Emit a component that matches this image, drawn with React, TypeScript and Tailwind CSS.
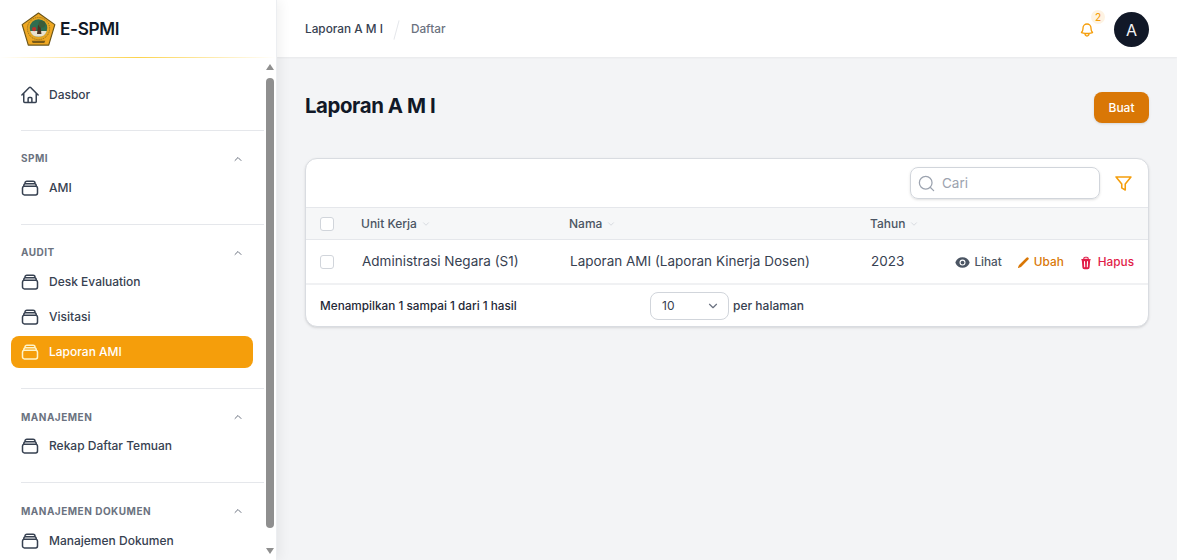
import React from "react";
import { ChevronDown, ChevronUp, Search } from "lucide-react";

function StackIcon({ className }: { className?: string }) {
  return (
    <svg viewBox="0 0 24 24" fill="none" stroke="currentColor" strokeWidth={1.8} className={className}>
      <path
        strokeLinecap="round"
        strokeLinejoin="round"
        d="M6 6.878V6a2.25 2.25 0 012.25-2.25h7.5A2.25 2.25 0 0118 6v.878m-12 0c.235-.083.487-.128.75-.128h10.5c.263 0 .515.045.75.128m-12 0A2.25 2.25 0 004.5 9v.878m13.5-3A2.25 2.25 0 0119.5 9v.878m0 0a2.246 2.246 0 00-.75-.128H5.25c-.263 0-.515.045-.75.128m15 0A2.25 2.25 0 0121 12v6a2.25 2.25 0 01-2.25 2.25H5.25A2.25 2.25 0 013 18v-6c0-.98.626-1.813 1.5-2.122"
      />
    </svg>
  );
}

function HomeIcon({ className }: { className?: string }) {
  return (
    <svg viewBox="0 0 24 24" fill="none" stroke="currentColor" strokeWidth={1.8} className={className}>
      <path
        strokeLinecap="round"
        strokeLinejoin="round"
        d="M2.25 12l8.954-8.955c.44-.439 1.152-.439 1.591 0L21.75 12M4.5 9.75v10.125c0 .621.504 1.125 1.125 1.125H9.75v-4.875c0-.621.504-1.125 1.125-1.125h2.25c.621 0 1.125.504 1.125 1.125V21h4.125c.621 0 1.125-.504 1.125-1.125V9.75M8.25 21h8.25"
      />
    </svg>
  );
}

function Logo() {
  return (
    <svg viewBox="0 0 36 36" className="w-[35px] h-[35px] shrink-0">
      <path d="M18 1 34.8 13 28.500 34H7.500L1.200 13Z" fill="#efa823" stroke="#6b5518" strokeWidth="1.200" strokeLinejoin="round" />
      <circle cx="18" cy="17" r="11.500" fill="#e3a524" stroke="#8a6a18" strokeWidth="1" strokeDasharray="1 1" />
      <circle cx="18" cy="16.500" r="9" fill="#2f6d4f" />
      <path d="M9.500 19.500h17a9 9 0 0 1-17 0Z" fill="#e8e2cf" />
      <path d="M17.500 13h2.500l1 9.500h-4.500Z" fill="#4a3423" />
      <circle cx="21.500" cy="12.500" r="3.500" fill="#3b5d3a" />
      <circle cx="13.500" cy="17.500" r="2.200" fill="#b8322a" />
      <path d="M11 29.500h14l-1 2.500H12Z" fill="#7a5a16" />
    </svg>
  );
}

function NavItem({ label, active }: { label: string; active?: boolean }) {
  return (
    <a
      className={
        active
          ? "flex items-center h-[31.5px] rounded-lg bg-[#f59e0b] text-white px-[9px] gap-[9px] text-[12px] font-medium"
          : "flex items-center h-[31.5px] rounded-lg text-[#374151] px-[9px] gap-[9px] text-[12px] font-medium"
      }
    >
      <StackIcon className={active ? "w-5 h-5 text-[#fef3c7]" : "w-5 h-5 text-[#374151]"} />
      <span>{label}</span>
    </a>
  );
}

function NavGroup({ title, items, activeItem }: { title: string; items: string[]; activeItem?: string }) {
  return (
    <div className="border-b border-[#e5e7eb] pt-[18px] pb-[20.33px] ml-[21px] mr-[12px]">
      <div className="flex items-center justify-between h-5 pr-5 mb-[3.5px]">
        <span className="text-[10px] font-bold tracking-[0.05em] text-[#6b7280]">{title}</span>
        <ChevronUp className="w-3 h-3 text-[#6b7280]" />
      </div>
      <div className="flex flex-col gap-[3.5px] -ml-[10px] mr-[11px]">
        {items.map((item) => (
          <NavItem key={item} label={item} active={item === activeItem} />
        ))}
      </div>
    </div>
  );
}

function Sidebar() {
  return (
    <aside className="w-[277px] shrink-0 h-full bg-white flex flex-col relative z-10 border-r border-[#eceef1] shadow-[2px_0_12px_rgba(0,0,0,0.07)]">
      <div className="h-[58px] shrink-0 flex items-center gap-1 pl-[21px] relative">
        <Logo />
        <span className="text-[17.2px] font-semibold text-[#111827] tracking-[-0.02em]">E-SPMI</span>
        <div className="absolute left-0 right-0 bottom-0 h-px bg-gradient-to-r from-transparent via-[#fcd34d] to-transparent"></div>
      </div>
      <nav className="flex-1 overflow-hidden relative">
        <div className="ml-[21px] mr-[12px] pt-[20.5px] pb-[19px] border-b border-[#e5e7eb]">
          <a className="flex items-center h-8 -ml-[10px] px-[9px] gap-[9px] text-[12px] font-medium text-[#374151]">
            <HomeIcon className="w-5 h-5 text-[#374151]" />
            <span>Dasbor</span>
          </a>
        </div>
        <NavGroup title="SPMI" items={["AMI"]} />
        <NavGroup title="AUDIT" items={["Desk Evaluation", "Visitasi", "Laporan AMI"]} activeItem="Laporan AMI" />
        <NavGroup title="MANAJEMEN" items={["Rekap Daftar Temuan"]} />
        <NavGroup title="MANAJEMEN DOKUMEN" items={["Manajemen Dokumen"]} />

        {/* native looking scrollbar */}
        <div className="absolute top-0 bottom-0 right-0 w-[12px] bg-white">
          <div className="absolute top-[6px] left-[2px] w-0 h-0 border-x-4 border-x-transparent border-b-[6px] border-b-[#8f8f8f]"></div>
          <div className="absolute top-[20px] left-[2px] w-2 h-[450px] rounded-full bg-[#8f8f8f]"></div>
          <div className="absolute bottom-[6px] left-[2px] w-0 h-0 border-x-4 border-x-transparent border-t-[6px] border-t-[#8f8f8f]"></div>
        </div>
      </nav>
    </aside>
  );
}

function Topbar() {
  return (
    <header className="h-[57px] shrink-0 bg-white flex items-center justify-between pl-7 pr-7 pt-[2px] shadow-[0_1px_2px_rgba(0,0,0,0.05)]">
      <div className="flex items-center text-[11.8px] font-medium mt-px">
        <span className="text-[#374151]">Laporan A M I</span>
        <span className="w-px h-5 bg-[#e5e7eb] rotate-[15deg] mx-[13.5px]"></span>
        <span className="text-[#6b7280]">Daftar</span>
      </div>
      <div className="flex items-center gap-[19px]">
        <div className="relative w-4 h-4">
          <svg viewBox="0 0 24 24" fill="none" stroke="#f59e0b" strokeWidth={2} className="w-4 h-4">
            <path
              strokeLinecap="round"
              strokeLinejoin="round"
              d="M14.857 17.082a23.848 23.848 0 005.454-1.31A8.967 8.967 0 0118 9.75v-.7V9A6 6 0 006 9v.75a8.967 8.967 0 01-2.312 6.022c1.733.64 3.56 1.085 5.455 1.31m5.714 0a24.255 24.255 0 01-5.714 0m5.714 0a3 3 0 11-5.714 0"
            />
          </svg>
          <span className="absolute -top-[12px] -right-[10px] w-[14px] h-[14px] rounded-full bg-[#fef3e2] text-[#f59e0b] text-[10px] leading-[14px] text-center font-medium">
            2
          </span>
        </div>
        <div className="w-[35px] h-[35px] rounded-full bg-[#111827] text-[#f3f4f6] text-[16px] flex items-center justify-center">
          A
        </div>
      </div>
    </header>
  );
}

function TableCard() {
  const rowCols = "grid grid-cols-[55px_208px_301px_1fr] items-center";
  return (
    <div className="mt-[35px] bg-white rounded-xl border border-[#d9dce1] shadow-sm overflow-hidden">
      <div className="h-[48px] flex items-center justify-end pr-[14px] gap-[13px]">
        <div className="w-[190px] h-8 rounded-lg border border-[#d1d5db] flex items-center pl-[6px] gap-[6px] shadow-sm">
          <Search strokeWidth={1.6} className="w-[19px] h-[19px] text-[#9ca3af]" />
          <span className="text-[13.5px] text-[#9ca3af]">Cari</span>
        </div>
        <svg viewBox="0 0 24 24" fill="none" stroke="#f59e0b" strokeWidth={1.8} className="w-[21px] h-[21px]">
          <path strokeLinecap="round" strokeLinejoin="round" d="M3.500 4.500h17l-6.500 8v7l-4-2.500v-4.500z" />
        </svg>
      </div>
      <div className={`${rowCols} h-[33px] bg-[#f6f7f8] border-y border-[#e5e7eb]`}>
        <div className="pl-[14px]">
          <div className="w-[14px] h-[14px] rounded-[3px] border border-[#d1d5db] bg-white"></div>
        </div>
        <div className="flex items-center gap-1 text-[12px] font-medium text-[#4b5563]">
          Unit Kerja <ChevronDown className="w-[10px] h-[10px] text-[#d1d5db]" />
        </div>
        <div className="flex items-center gap-1 text-[12px] font-medium text-[#4b5563]">
          Nama <ChevronDown className="w-[10px] h-[10px] text-[#d1d5db]" />
        </div>
        <div className="flex items-center gap-1 text-[12px] font-medium text-[#4b5563]">
          Tahun <ChevronDown className="w-[10px] h-[10px] text-[#d1d5db]" />
        </div>
      </div>
      <div className={`${rowCols} h-[45px] border-b-2 border-[#f0f1f3] text-[13.5px] text-[#374151]`}>
        <div className="pl-[14px]">
          <div className="w-[14px] h-[14px] rounded-[3px] border border-[#d1d5db] bg-white"></div>
        </div>
        <div className="pl-px">Administrasi Negara (S1)</div>
        <div className="pl-px">Laporan AMI (Laporan Kinerja Dosen)</div>
        <div className="flex items-center justify-between pl-px pr-[14px]">
          <span>2023</span>
          <div className="flex items-center gap-[15px] text-[11.8px] font-medium mt-[2px]">
            <span className="flex items-center gap-1 text-[#4b5563]">
              <svg viewBox="0 0 20 20" fill="currentColor" className="w-[15px] h-[15px]">
                <path d="M10 12.500a2.500 2.500 0 100-5 2.500 2.500 0 000 5z" />
                <path
                  fillRule="evenodd"
                  clipRule="evenodd"
                  d="M.664 10.590a1.651 1.651 0 010-1.186A10.004 10.004 0 0110 3c4.257 0 7.893 2.660 9.336 6.410.147.381.146.804 0 1.186A10.004 10.004 0 0110 17c-4.257 0-7.893-2.660-9.336-6.410zM14 10a4 4 0 11-8 0 4 4 0 018 0z"
                />
              </svg>
              Lihat
            </span>
            <span className="flex items-center gap-1 text-[#d97706]">
              <svg viewBox="0 0 20 20" fill="currentColor" className="w-[13px] h-[13px]">
                <path d="M2.695 14.763l-1.262 3.154a.500.500 0 00.650.650l3.155-1.262a4 4 0 001.343-.885L17.500 5.500a2.121 2.121 0 00-3-3L3.580 13.420a4 4 0 00-.885 1.343z" />
              </svg>
              Ubah
            </span>
            <span className="flex items-center gap-[5px] text-[#e11d48]">
              <svg viewBox="0 0 20 20" fill="currentColor" className="w-[14px] h-[14px]">
                <path
                  fillRule="evenodd"
                  clipRule="evenodd"
                  d="M8.750 1A2.750 2.750 0 006 3.750v.443c-.795.077-1.584.176-2.365.298a.750.750 0 10.230 1.482l.149-.022.841 10.518A2.750 2.750 0 007.596 19h4.807a2.750 2.750 0 002.742-2.530l.841-10.520.149.023a.750.750 0 00.230-1.482A41.030 41.030 0 0014 4.193V3.750A2.750 2.750 0 0011.250 1h-2.500zM10 4c.840 0 1.673.025 2.500.075V3.750c0-.690-.560-1.250-1.250-1.250h-2.500c-.690 0-1.250.560-1.250 1.250v.325C8.327 4.025 9.160 4 10 4zM8.580 7.720a.750.750 0 00-1.500.060l.300 7.500a.750.750 0 101.500-.060l-.300-7.500zm4.340.060a.750.750 0 10-1.500-.060l-.300 7.500a.750.750 0 101.500.060l.300-7.500z"
                />
              </svg>
              Hapus
            </span>
          </div>
        </div>
      </div>
      <div className="relative h-[41px] flex items-center justify-center">
        <span className="absolute left-[14px] top-[13px] text-[11.75px] font-medium text-[#1f2937]">
          Menampilkan 1 sampai 1 dari 1 hasil
        </span>
        <div className="flex items-center gap-1">
          <div className="w-[79px] h-[28px] rounded-lg border border-[#d1d5db] flex items-center justify-between pl-[11px] pr-[8px] text-[12px] text-[#374151]">
            10
            <ChevronDown className="w-[14px] h-[14px] text-[#6b7280]" />
          </div>
          <span className="text-[12px] font-medium text-[#374151]">per halaman</span>
        </div>
      </div>
    </div>
  );
}

export default function App() {
  return (
    <div className="h-screen w-full overflow-hidden flex bg-[#f3f4f6] font-['Inter',sans-serif]">
      <Sidebar />
      <div className="flex-1 flex flex-col min-w-0">
        <Topbar />
        <main className="px-7 pt-[35px]">
          <div className="flex items-center justify-between h-[31px]">
            <h1 className="text-[20.4px] font-bold text-[#111827] tracking-[-0.02em] -mt-[2px]">Laporan A M I</h1>
            <button className="w-[55px] h-[31px] rounded-lg bg-[#d97706] text-white text-[12px] font-medium shadow-sm">
              Buat
            </button>
          </div>
          <TableCard />
        </main>
      </div>
    </div>
  );
}
